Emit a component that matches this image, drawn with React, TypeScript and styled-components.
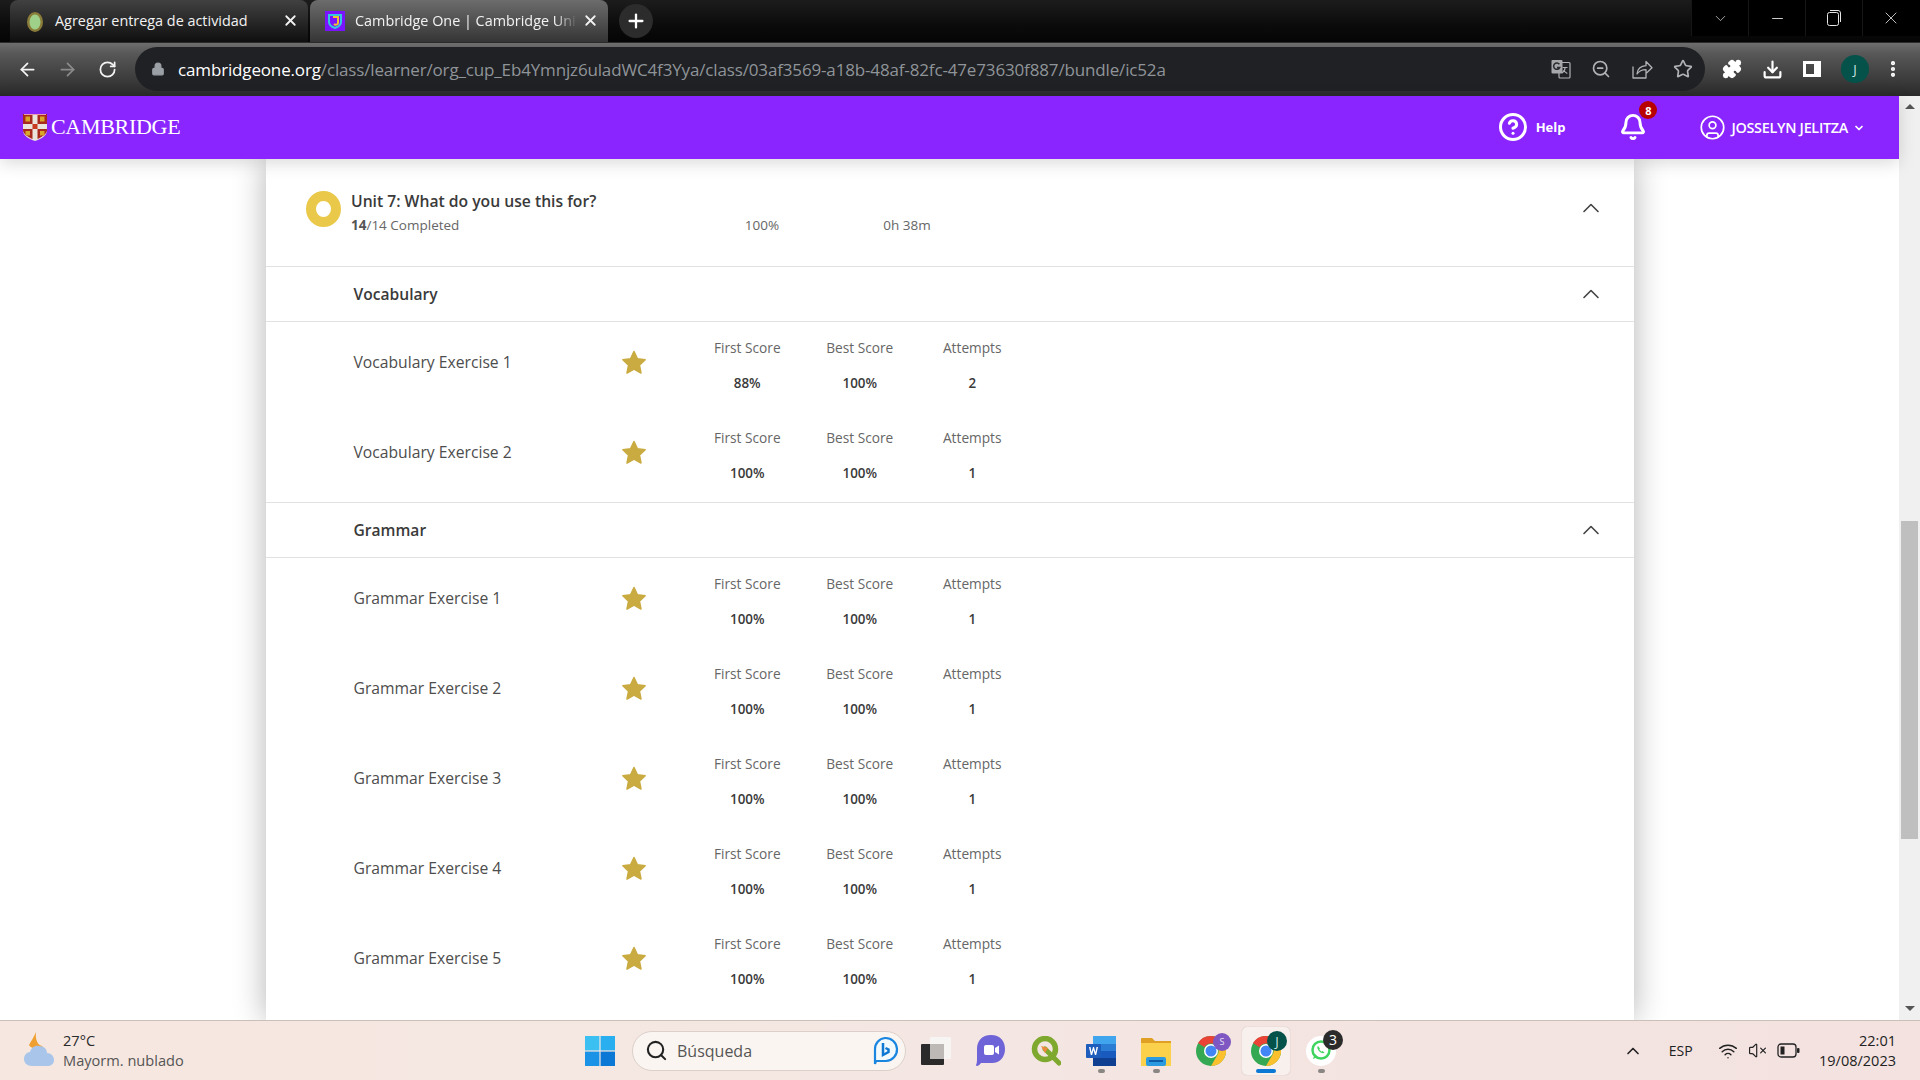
// App.tsx
import styled, { createGlobalStyle } from 'styled-components';
import {
  ArrowLeft,
  ArrowRight,
  RotateCw,
  Lock,
  ZoomOut,
  Star,
  Download,
  ChevronUp,
  ChevronDown,
  X,
  Plus,
  Minus,
  EllipsisVertical,
  Search,
  VolumeX,
  Wifi,
  Puzzle,
  CircleUser,
  Bell,
  CircleHelp,
} from 'lucide-react';

const GlobalStyle = createGlobalStyle`
  html, body { margin: 0; padding: 0; overflow: hidden; background: #fff; }
  * { box-sizing: border-box; }
  body { font-family: 'Open Sans', sans-serif; }
`;

const Screen = styled.div`
  width: 1920px;
  height: 1080px;
  display: flex;
  flex-direction: column;
  overflow: hidden;
`;

// --- browser chrome ---

const TabStrip = styled.div`
  height: 42px;
  display: flex;
  background: linear-gradient(to bottom, #1c1c1c, #0b0b0b 60%, #050505);
  padding-left: 10px;
  position: relative;
`;

const Tab = styled.div<{ $active?: boolean }>`
  width: 298px;
  height: 42px;
  margin-right: 2px;
  padding: 0 9px 1px 15px;
  display: flex;
  align-items: center;
  border-radius: 8px 8px 0 0;
  background: ${(p) =>
    p.$active
      ? 'linear-gradient(to bottom, #6c6c6c, #353535)'
      : 'linear-gradient(to bottom, #414141, #0f0f0f)'};
  color: #f2f2f2;
  font-size: 14.4px;
`;

const TabFavicon = styled.span`
  width: 20px;
  height: 20px;
  flex: none;
  margin-right: 10px;
  display: flex;
`;

const TabTitle = styled.span<{ $fade?: boolean }>`
  flex: 1;
  white-space: nowrap;
  ${(p) => (p.$fade ? '-webkit-mask-image: linear-gradient(to right, #000 88%, transparent 98%);' : '')}
`;

const NewTab = styled.div`
  width: 34px;
  height: 34px;
  margin: 4px 0 0 9px;
  border-radius: 50%;
  background: #2c2c2c;
  display: flex;
  align-items: center;
  justify-content: center;
  color: #fff;
`;

const WindowControls = styled.div`
  position: absolute;
  top: 0;
  right: 0;
  height: 36px;
  padding-right: 1px;
  display: flex;
  background: #000;
`;

const WindowButton = styled.div`
  width: 57px;
  display: flex;
  align-items: center;
  justify-content: center;
  color: #e6e6e6;
  border-left: 1px solid #161616;
`;

const Toolbar = styled.div`
  height: 54px;
  padding: 5px 0 4px 7px;
  display: flex;
  align-items: center;
  background: linear-gradient(to bottom, #6e6e6e, #585858 20%, #2c2c2c);
  border-top: 1px solid #2a2a2a;
  border-bottom: 2px solid #2b2b2b;
`;

const NavButton = styled.div<{ $muted?: boolean }>`
  width: 40px;
  display: flex;
  justify-content: center;
  color: ${(p) => (p.$muted ? '#8b8b8b' : '#f4f4f4')};
`;

const Omnibox = styled.div`
  width: 1570px;
  height: 44px;
  margin-left: 8px;
  padding: 0 0 0 16px;
  display: flex;
  align-items: center;
  border-radius: 22px;
  background: #202124;
  color: #9aa0a6;
`;

const Url = styled.div`
  margin-left: 13px;
  flex: 1;
  font-size: 17px;
  letter-spacing: -0.15px;
  white-space: nowrap;
  color: #8f9499;
  b { font-weight: 400; color: #fff; }
`;

const OmniIcons = styled.div`
  display: flex;
  align-items: center;
  gap: 20.4px;
  padding-right: 12px;
  color: #b0b3b6;
`;

const ToolbarIcons = styled.div`
  margin-left: 17px;
  display: flex;
  align-items: center;
  gap: 20px;
  color: #fff;
`;

const MenuDots = styled(EllipsisVertical)`
  margin-left: -6.5px;
`;

const Avatar = styled.div<{ $size?: number }>`
  width: ${(p) => p.$size ?? 28}px;
  height: ${(p) => p.$size ?? 28}px;
  border-radius: 50%;
  background: #04524a;
  color: #cfe6e2;
  font-size: 13px;
  display: flex;
  align-items: center;
  justify-content: center;
`;

// --- page ---

const Viewport = styled.div`
  flex: 1;
  min-height: 0;
  display: flex;
`;

const Page = styled.div`
  flex: 1;
  min-width: 0;
  display: flex;
  flex-direction: column;
`;

const NavBar = styled.header`
  height: 63px;
  flex: none;
  padding: 0 34px 1px 23px;
  display: flex;
  align-items: center;
  background: #8a25ff;
  color: #fff;
  position: relative;
  z-index: 2;
  box-shadow: 0 4px 16px rgba(0, 0, 0, 0.15);
`;

const Brand = styled.div`
  display: flex;
  align-items: center;
  gap: 4px;
  margin-right: auto;
  font-family: 'Liberation Serif', serif;
  font-size: 22px;
  letter-spacing: -0.3px;
`;

const HelpLink = styled.div`
  display: flex;
  align-items: center;
  gap: 8px;
  margin-right: 54px;
  font-size: 13px;
  font-weight: 700;
`;

const BellWrap = styled.div`
  position: relative;
  display: flex;
  margin-right: 52px;
`;

const BellBadge = styled.span`
  position: absolute;
  top: -12px;
  right: -10px;
  width: 18px;
  height: 18px;
  border-radius: 50%;
  background: #b80000;
  color: #fff;
  font-size: 11px;
  font-weight: 700;
  display: flex;
  align-items: center;
  justify-content: center;
`;

const UserMenu = styled.div`
  display: flex;
  align-items: center;
  gap: 5px;
  font-size: 14.4px;
  font-weight: 600;
  letter-spacing: -0.3px;
  padding-top: 1px;
`;

const Canvas = styled.main`
  flex: 1;
  min-height: 0;
  overflow: hidden;
  padding: 0 265px 0 266px;
`;

const Card = styled.section`
  background: #fff;
  box-shadow: 0 0 30px rgba(0, 0, 0, 0.3);
  height: 100%;
`;

const UnitRow = styled.div`
  height: 108px;
  padding: 25px 28px 0 40px;
  display: flex;
  align-items: flex-start;
  border-bottom: 1px solid #e2e2e2;
`;

const Ring = styled.div`
  width: 35px;
  height: 36px;
  flex: none;
  margin-top: 7px;
  border-radius: 50%;
  border: 10px solid #e9c84a;
  background: #fff;
`;

const UnitText = styled.div`
  margin-left: 10px;
  flex: 1;
`;

const UnitTitle = styled.div`
  font-size: 15.7px;
  font-weight: 600;
  line-height: 22px;
  margin-top: 6px;
  color: #3a3a3a;
`;

const UnitMeta = styled.div`
  display: grid;
  grid-template-columns: 370px 82px 208px;
  margin-top: 2px;
  font-size: 13.5px;
  line-height: 22px;
  color: #666;
  span { text-align: center; }
  span:first-child { text-align: left; }
  b { font-weight: 700; color: #555; }
`;

const Toggle = styled.div<{ $offset?: number }>`
  width: 30px;
  flex: none;
  display: flex;
  justify-content: center;
  color: #444;
  margin-top: ${(p) => p.$offset ?? 0}px;
`;

const SectionRow = styled.div`
  height: 55px;
  padding: 0 28px 0 87.5px;
  display: flex;
  align-items: center;
  justify-content: space-between;
  border-bottom: 1px solid #e2e2e2;
  font-size: 15.6px;
  font-weight: 600;
  color: #3a3a3a;
`;

const ExerciseList = styled.div<{ $divided?: boolean }>`
  border-bottom: ${(p) => (p.$divided ? '1px solid #e2e2e2' : 'none')};
`;

const ExerciseRow = styled.div`
  height: 80px;
  margin-bottom: 10px;
  padding-left: 87.5px;
  display: flex;
  align-items: center;
`;

const ExerciseName = styled.div`
  width: 248.5px;
  font-size: 15.7px;
  color: #4d4d4d;
`;

const StarCell = styled.div`
  width: 64px;
  display: flex;
  justify-content: center;
`;

const Scores = styled.div`
  margin-left: 25px;
  display: flex;
`;

const ScoreCell = styled.div`
  width: 112.5px;
  height: 80px;
  padding-top: 17px;
  text-align: center;
`;

const ScoreLabel = styled.div`
  font-size: 13.7px;
  line-height: 18px;
  color: #666;
`;

const ScoreValue = styled.div`
  margin-top: 17px;
  font-size: 13.4px;
  font-weight: 600;
  line-height: 18px;
  color: #3a3a3a;
`;

// --- page scrollbar ---

const ScrollBar = styled.div`
  width: 21px;
  flex: none;
  display: flex;
  flex-direction: column;
  align-items: center;
  background: #f0f0f0;
  padding-top: 8px;
`;

const ScrollThumb = styled.div`
  width: 17px;
  height: 318px;
  margin-top: 412px;
  background: #bfbfbf;
`;

const ScrollArrow = styled.div<{ $down?: boolean }>`
  width: 0;
  height: 0;
  border-left: 5px solid transparent;
  border-right: 5px solid transparent;
  ${(p) =>
    p.$down
      ? 'border-top: 5px solid #555; margin-top: auto; margin-bottom: 9px;'
      : 'border-bottom: 5px solid #555;'}
`;

// --- taskbar ---

const Taskbar = styled.footer`
  height: 60px;
  flex: none;
  display: flex;
  align-items: center;
  padding: 0 24px 0 23px;
  background: linear-gradient(to right, #f6e8e0, #f4e6e2 50%, #f3e2e0);
  border-top: 1px solid #cbbfba;
  color: #222;
  position: relative;
  z-index: 3;
`;

const Weather = styled.div`
  width: 552.5px;
  flex: none;
  display: flex;
  align-items: center;
  gap: 8px;
  padding-bottom: 2px;
`;

const WeatherText = styled.div`
  font-size: 14.6px;
  line-height: 20px;
  color: #2a2a2a;
  span { display: block; color: #555; }
`;

const TaskIcon = styled.div<{ $active?: boolean; $running?: boolean }>`
  width: 48px;
  height: 48px;
  margin-right: 7px;
  display: flex;
  align-items: center;
  justify-content: center;
  border-radius: 5px;
  position: relative;
  background: ${(p) => (p.$active ? '#f8f0ec' : 'transparent')};
  box-shadow: ${(p) => (p.$active ? '0 0 1px rgba(0,0,0,0.25)' : 'none')};
  &::after {
    content: '';
    display: ${(p) => (p.$active || p.$running ? 'block' : 'none')};
    position: absolute;
    bottom: 2px;
    left: 50%;
    width: ${(p) => (p.$active ? '20px' : '7px')};
    height: 4px;
    margin-left: ${(p) => (p.$active ? '-10px' : '-3.5px')};
    border-radius: 2px;
    background: ${(p) => (p.$active ? '#0a78d4' : '#8a8684')};
  }
`;

const CountBadge = styled.span`
  position: absolute;
  top: 3px;
  right: 2px;
  width: 20px;
  height: 20px;
  border-radius: 50%;
  background: #2b2b2b;
  color: #fff;
  font-size: 14px;
  display: flex;
  align-items: center;
  justify-content: center;
`;

const ProfileDot = styled(Avatar)`
  position: absolute;
  top: 4px;
  right: 3px;
`;

const SmallDot = styled.span`
  position: absolute;
  top: 6px;
  right: 4px;
  width: 18px;
  height: 18px;
  border-radius: 50%;
  background: #7e57c2;
  color: #e8e0f5;
  font-size: 9px;
  display: flex;
  align-items: center;
  justify-content: center;
`;

const SearchBox = styled.div`
  width: 274px;
  height: 40px;
  margin: 0 6px 0 1.5px;
  padding: 0 6px 0 12px;
  display: flex;
  align-items: center;
  gap: 9px;
  border-radius: 20px;
  background: #fbf5f1;
  border: 1px solid #dcd0ca;
  color: #555;
  font-size: 16px;
  span { flex: 1; }
`;

const Tray = styled.div`
  margin-left: auto;
  display: flex;
  align-items: center;
  color: #222;
`;

const TrayLang = styled.span`
  font-size: 14px;
  margin: 0 25.4px 0 26px;
`;

const TrayIcons = styled.div`
  display: flex;
  align-items: center;
  gap: 10px;
`;

const Clock = styled.div`
  margin-left: 19px;
  text-align: right;
  font-size: 14.5px;
  line-height: 20px;
`;

// --- drawings ---

const Shield = () => (
  <svg width="24" height="27" viewBox="0 0 24 27">
    <path d="M0 0h24v16c0 6-6 9-12 11C6 25 0 22 0 16z" fill="#e9e4dc" />
    <path d="M0 0h9.500v10H0zM14.500 0H24v10h-9.500zM0 15h9.500v10C5 23 0 20 0 16zM14.500 15H24v1c0 4-5 7-9.500 9z" fill="#a8291e" />
    <path d="M9.500 10h5v5h-5z" fill="#c8391f" />
    <path d="M2.500 2.500h4.500v5H2.500zM17 2.500h4.500v5H17zM2.500 17h4.500v4.500H2.500zM17 17h4.500v4.500H17z" fill="#d9a82a" />
    <path d="M1 0h22v1H1z" fill="#e79ab0" />
  </svg>
);

const GoldStar = () => (
  <svg width="26" height="25" viewBox="0 0 24 24">
    <path
      d="M12 1.500l3.300 7 7.400.9-5.500 5.100 1.500 7.600L12 18.400l-6.700 3.700 1.500-7.600L1.300 9.400l7.400-.9z"
      fill="#c9ab41"
      stroke="#c9ab41"
      strokeWidth="1.500"
      strokeLinejoin="round"
    />
  </svg>
);

const TranslateIcon = () => (
  <svg width="20" height="20" viewBox="0 0 20 20">
    <rect x="8" y="3.500" width="11" height="15.500" rx="1" fill="#202124" stroke="#b0b3b6" strokeWidth="1.200" />
    <path d="M11.500 8.500h5M14 8v1c0 2.500-1.500 4-3 5M12.500 11c.8 1.500 2 2.600 3.800 3.500" fill="none" stroke="#b0b3b6" strokeWidth="1.100" />
    <rect x="0.500" y="1" width="11" height="13.500" rx="1" fill="#a6a8aa" />
    <path d="M8.400 5.200a3.200 3.200 0 1 0 .4 3.200H6" fill="none" stroke="#2a2b2e" strokeWidth="1.500" />
  </svg>
);

const ShareIcon = () => (
  <svg width="21" height="20" viewBox="0 0 21 20" fill="none" stroke="#b0b3b6" strokeWidth="1.300" strokeLinejoin="round">
    <path d="M1 7.500V19h13v-4" />
    <path d="M5 15c.5-5 4-8 9-8.300V2.500l6 6.200-6 5.800v-3.900c-4 0-7 1.400-9 4.400z" />
  </svg>
);

const WindowsLogo = () => (
  <svg width="30" height="30" viewBox="0 0 30 30">
    <path d="M0 0h14.400v14.400H0z" fill="#3cc0f2" />
    <path d="M15.600 0H30v14.400H15.600z" fill="#29aef0" />
    <path d="M0 15.600h14.400V30H0z" fill="#1a93e6" />
    <path d="M15.600 15.600H30V30H15.600z" fill="#0a78d4" />
  </svg>
);

const ChromeIcon = () => (
  <svg width="30" height="30" viewBox="0 0 30 30">
    <circle cx="15" cy="15" r="15" fill="#34a853" />
    <path d="M15 0a15 15 0 0 1 13 7.500H15a7.500 7.500 0 0 0-6.500 3.750L2 7A15 15 0 0 1 15 0z" fill="#ea4335" />
    <path d="M28 7.500A15 15 0 0 1 15 30l6.500-11.250A7.500 7.500 0 0 0 21.500 11z" fill="#fbc02d" />
    <circle cx="15" cy="15" r="7" fill="#fff" />
    <circle cx="15" cy="15" r="5.500" fill="#4285f4" />
  </svg>
);

const ChatIcon = () => (
  <svg width="30" height="32" viewBox="0 0 30 32">
    <path d="M15 0c9 0 14 6 14 14s-5 14-13 14H5c-2 3-5 4-5 2 1-2 1-4 1-8V14C1 6 6 0 15 0z" fill="#6f63d8" />
    <rect x="8" y="10" width="10" height="10" rx="2" fill="#fff" />
    <path d="M19 13l4-2.500v9L19 17z" fill="#fff" />
  </svg>
);

const QgisIcon = () => (
  <svg width="30" height="30" viewBox="0 0 30 30">
    <circle cx="14" cy="13" r="10.500" fill="none" stroke="#7fa82f" strokeWidth="5.500" />
    <path d="M14 13l14 14" stroke="#7fa82f" strokeWidth="5" strokeLinecap="round" />
    <path d="M10 10l7 2-3 5z" fill="#ee8a3c" />
  </svg>
);

const WordIcon = () => (
  <svg width="30" height="30" viewBox="0 0 30 30">
    <path d="M7 0h23v8H7z" fill="#41a5ee" />
    <path d="M7 8h23v7H7z" fill="#2b7cd3" />
    <path d="M7 15h23v7H7z" fill="#185abd" />
    <path d="M7 22h23v8H7z" fill="#103f91" />
    <rect x="0" y="8" width="15" height="14" rx="1" fill="#1e5dbb" />
    <path d="M3 11l1.800 8h1.300L7.500 14l1.400 5h1.300L12 11h-1.500l-1 5.200L8 11H7l-1.500 5.200L4.500 11z" fill="#fff" />
  </svg>
);

const FolderIcon = () => (
  <svg width="30" height="30" viewBox="0 0 30 30">
    <path d="M0 3q0-1 1-1h10l3 3h16v6H0z" fill="#dfa024" />
    <path d="M0 7h30v23H0z" fill="#fbd14b" />
    <rect x="5" y="21" width="20" height="9" rx="2" fill="#2a9be0" />
    <rect x="8" y="24" width="14" height="2" fill="#0d5ea8" />
  </svg>
);

const WhatsappIcon = () => (
  <svg width="30" height="30" viewBox="0 0 30 30">
    <circle cx="15" cy="15" r="15" fill="#fff" />
    <circle cx="15" cy="14" r="8.500" fill="none" stroke="#3fd45f" strokeWidth="2.500" />
    <path d="M7 23l2-5 3 3z" fill="#3fd45f" />
    <path d="M12 10c-1.500 1.500 0 4 1.500 5.500s4 2.500 5 1l-2-1.500-1 .8-2.300-2.300.8-1z" fill="#3fd45f" />
  </svg>
);

const TaskViewIcon = () => (
  <svg width="30" height="28" viewBox="0 0 30 28">
    <rect x="0" y="7" width="23" height="21" rx="1" fill="#2a2a2a" />
    <rect x="9" y="0" width="21" height="22" rx="1" fill="#f7f5f3" />
    <rect x="9" y="7" width="14" height="15" fill="#bcb9b7" />
  </svg>
);

const BingIcon = () => (
  <svg width="27" height="30" viewBox="0 0 27 30">
    <path d="M13 2a11.500 11.500 0 0 1 1 23H4l-1 3V13.500A11 11 0 0 1 13 2z" fill="#f3fafe" stroke="#1a86e0" strokeWidth="2.200" />
    <path d="M11 7v12l5.500-3v-2.500L13.500 12" fill="none" stroke="#0f78d2" strokeWidth="2.500" />
  </svg>
);

const WeatherIcon = () => (
  <svg width="32" height="36" viewBox="0 0 32 36">
    <path d="M13 0c-2 5-5 9-7 13 2 4 9 5 14 1-5 0-8-6-7-14z" fill="#f0a030" />
    <path d="M9 34c-5 0-8-3-8-7s3-7 6-7c1-4 5-7 9-6 5 0 8 3 8 7 4 0 7 3 7 7s-3 6-7 6z" fill="#a9c6ea" />
  </svg>
);

const SidePanelIcon = () => (
  <svg width="18" height="20" viewBox="0 0 18 20">
    <path fillRule="evenodd" d="M0 2h18v16H0zM3 5v10h8V5z" fill="#fff" />
  </svg>
);

const BatteryIcon = () => (
  <svg width="23" height="15" viewBox="0 0 23 15">
    <rect x="1" y="1" width="18" height="13" rx="3" fill="none" stroke="#222" strokeWidth="1.300" />
    <rect x="3.500" y="3.500" width="4" height="8" fill="#222" />
    <rect x="20" y="5" width="2.500" height="5" rx="1" fill="#222" />
  </svg>
);

const exerciseRow = (name: string, first: string, best: string, attempts: string) => (
  <ExerciseRow key={name}>
    <ExerciseName>{name}</ExerciseName>
    <StarCell>
      <GoldStar />
    </StarCell>
    <Scores>
      <ScoreCell>
        <ScoreLabel>First Score</ScoreLabel>
        <ScoreValue>{first}</ScoreValue>
      </ScoreCell>
      <ScoreCell>
        <ScoreLabel>Best Score</ScoreLabel>
        <ScoreValue>{best}</ScoreValue>
      </ScoreCell>
      <ScoreCell>
        <ScoreLabel>Attempts</ScoreLabel>
        <ScoreValue>{attempts}</ScoreValue>
      </ScoreCell>
    </Scores>
  </ExerciseRow>
);

const App = () => {
  return (
    <Screen>
      <GlobalStyle />
      <TabStrip>
        <Tab>
          <TabFavicon>
            <svg width="20" height="22" viewBox="0 0 20 22">
              <ellipse cx="10" cy="11" rx="8" ry="10" fill="#8a7d3a" />
              <ellipse cx="10" cy="11" rx="5.500" ry="7.500" fill="#9fd08a" />
            </svg>
          </TabFavicon>
          <TabTitle>Agregar entrega de actividad</TabTitle>
          <X size={17} strokeWidth={2.5} />
        </Tab>
        <Tab $active>
          <TabFavicon>
            <svg width="20" height="20" viewBox="0 0 20 20">
              <rect width="20" height="20" fill="#7a14ff" />
              <path d="M4 4h12v7c0 3-3 5-6 6-3-1-6-3-6-6z" fill="none" stroke="#35c6e0" strokeWidth="2" />
              <path d="M8 6h5v6c0 2-3 2-4 1" fill="none" stroke="#f4c430" strokeWidth="2" />
            </svg>
          </TabFavicon>
          <TabTitle $fade>Cambridge One | Cambridge Uni</TabTitle>
          <X size={17} strokeWidth={2.5} />
        </Tab>
        <NewTab>
          <Plus size={22} strokeWidth={2.5} />
        </NewTab>
        <WindowControls>
          <WindowButton>
            <ChevronDown size={17} strokeWidth={1} />
          </WindowButton>
          <WindowButton>
            <Minus size={17} strokeWidth={1.25} />
          </WindowButton>
          <WindowButton>
            <svg width="14" height="16" viewBox="0 0 14 16" fill="none" stroke="#e6e6e6">
              <rect x="0.500" y="2.500" width="11" height="13" rx="2" />
              <path d="M3 .5h8a2.500 2.500 0 0 1 2.500 2.500v9" />
            </svg>
          </WindowButton>
          <WindowButton>
            <X size={20} strokeWidth={1} />
          </WindowButton>
        </WindowControls>
      </TabStrip>

      <Toolbar>
        <NavButton>
          <ArrowLeft size={21} strokeWidth={2} />
        </NavButton>
        <NavButton $muted>
          <ArrowRight size={21} strokeWidth={2} />
        </NavButton>
        <NavButton>
          <RotateCw size={19} strokeWidth={2.2} />
        </NavButton>
        <Omnibox>
          <Lock size={14} fill="#9aa0a6" strokeWidth={2} />
          <Url>
            <b>cambridgeone.org</b>/class/learner/org_cup_Eb4Ymnjz6uladWC4f3Yya/class/03af3569-a18b-48af-82fc-47e73630f887/bundle/ic52a
          </Url>
          <OmniIcons>
            <TranslateIcon />
            <ZoomOut size={20} />
            <ShareIcon />
            <Star size={20} />
          </OmniIcons>
        </Omnibox>
        <ToolbarIcons>
          <Puzzle size={20} fill="#fff" />
          <Download size={21} strokeWidth={2.5} />
          <SidePanelIcon />
          <Avatar>J</Avatar>
          <MenuDots size={20} strokeWidth={3} />
        </ToolbarIcons>
      </Toolbar>

      <Viewport>
        <Page>
          <NavBar>
            <Brand>
              <Shield />
              CAMBRIDGE
            </Brand>
            <HelpLink>
              <CircleHelp size={30} strokeWidth={2.4} />
              Help
            </HelpLink>
            <BellWrap>
              <Bell size={28} strokeWidth={2.5} />
              <BellBadge>8</BellBadge>
            </BellWrap>
            <UserMenu>
              <CircleUser size={27} strokeWidth={1.5} />
              JOSSELYN JELITZA
              <ChevronDown size={12} strokeWidth={3.5} />
            </UserMenu>
          </NavBar>

          <Canvas>
            <Card>
              <UnitRow>
                <Ring />
                <UnitText>
                  <UnitTitle>Unit 7: What do you use this for?</UnitTitle>
                  <UnitMeta>
                    <span>
                      <b>14</b>/14 Completed
                    </span>
                    <span>100%</span>
                    <span>0h 38m</span>
                  </UnitMeta>
                </UnitText>
                <Toggle $offset={10}>
                  <ChevronUp size={28} strokeWidth={1.4} />
                </Toggle>
              </UnitRow>

              <SectionRow>
                Vocabulary
                <Toggle>
                  <ChevronUp size={28} strokeWidth={1.4} />
                </Toggle>
              </SectionRow>
              <ExerciseList $divided>
                {exerciseRow('Vocabulary Exercise 1', '88%', '100%', '2')}
                {exerciseRow('Vocabulary Exercise 2', '100%', '100%', '1')}
              </ExerciseList>

              <SectionRow>
                Grammar
                <Toggle>
                  <ChevronUp size={28} strokeWidth={1.4} />
                </Toggle>
              </SectionRow>
              <ExerciseList>
                {exerciseRow('Grammar Exercise 1', '100%', '100%', '1')}
                {exerciseRow('Grammar Exercise 2', '100%', '100%', '1')}
                {exerciseRow('Grammar Exercise 3', '100%', '100%', '1')}
                {exerciseRow('Grammar Exercise 4', '100%', '100%', '1')}
                {exerciseRow('Grammar Exercise 5', '100%', '100%', '1')}
              </ExerciseList>
            </Card>
          </Canvas>
        </Page>
        <ScrollBar>
          <ScrollArrow />
          <ScrollThumb />
          <ScrollArrow $down />
        </ScrollBar>
      </Viewport>

      <Taskbar>
        <Weather>
          <WeatherIcon />
          <WeatherText>
            27°C
            <span>Mayorm. nublado</span>
          </WeatherText>
        </Weather>
        <TaskIcon>
          <WindowsLogo />
        </TaskIcon>
        <SearchBox>
          <Search size={23} strokeWidth={2.2} color="#222" />
          <span>Búsqueda</span>
          <BingIcon />
        </SearchBox>
        <TaskIcon>
          <TaskViewIcon />
        </TaskIcon>
        <TaskIcon>
          <ChatIcon />
        </TaskIcon>
        <TaskIcon>
          <QgisIcon />
        </TaskIcon>
        <TaskIcon $running>
          <WordIcon />
        </TaskIcon>
        <TaskIcon $running>
          <FolderIcon />
        </TaskIcon>
        <TaskIcon>
          <ChromeIcon />
          <SmallDot>S</SmallDot>
        </TaskIcon>
        <TaskIcon $active>
          <ChromeIcon />
          <ProfileDot $size={20}>J</ProfileDot>
        </TaskIcon>
        <TaskIcon $running>
          <WhatsappIcon />
          <CountBadge>3</CountBadge>
        </TaskIcon>
        <Tray>
          <ChevronUp size={20} strokeWidth={2} />
          <TrayLang>ESP</TrayLang>
          <TrayIcons>
            <Wifi size={20} strokeWidth={1.75} />
            <VolumeX size={19} strokeWidth={1.5} />
            <BatteryIcon />
          </TrayIcons>
          <Clock>
            22:01
            <br />
            19/08/2023
          </Clock>
        </Tray>
      </Taskbar>
    </Screen>
  );
};

export default App;
